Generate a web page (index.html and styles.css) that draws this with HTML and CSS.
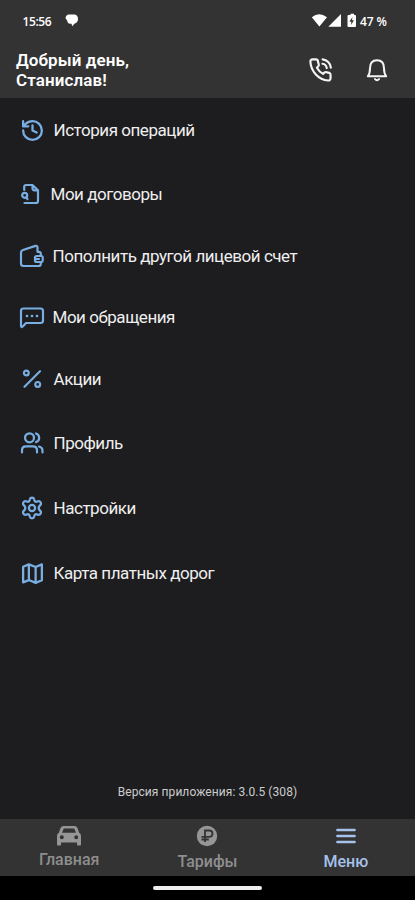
FILE: index.html
```html
<!DOCTYPE html>
<html lang="ru">
<head>
<meta charset="utf-8">
<meta name="viewport" content="width=device-width">
<title>Меню</title>
<link rel="stylesheet" href="styles.css">
</head>
<body>
<header class="top">
  <div class="status">
    <span class="time">15:56</span>
    <svg class="bubble" width="14" height="14" viewBox="0 0 14 14"><path d="M4 .5h5a4.3 4.3 0 0 1 4 4.2c0 2.8-1.4 4.5-3.3 4.9L7.200 12.300 6.500 9.800H5.200C3 9.800 2.400 8.300 2.300 6.800L.5 4.300C.7 2 2 .5 4 .5Z"/></svg>
    <svg class="signals" width="45" height="16" viewBox="0 0 45 16"><path d="M.8 4.200Q8-1.500 16 4.200L8.400 13.500ZM30 1v12.800H17.300ZM38 2h1.500V.7h3.600V2H44q1 0 1 1v10q0 1-1 1h-6.500q-1 0-1-1V3q0-1 1-1Z"/><path class="bolt" d="m41.400 4-3 4.700h2L40 12l3-4.700h-2Z"/></svg>
    <span class="charge">47 %</span>
  </div>
  <div class="greeting">
    <h1>Добрый день,<br>Станислав!</h1>
    <svg class="action phone" width="26" height="26" viewBox="0 0 24 24"><path d="M20.800 16.500v3.200a2 2 0 0 1-2.200 2A18.500 18.500 0 0 1 2.200 4.400a2 2 0 0 1 2-2.200h3a2 2 0 0 1 2 1.700c.1.900.3 1.800.7 2.700a2 2 0 0 1-.5 2.100L8.200 9.900a15 15 0 0 0 5.700 5.700l1.200-1.200a2 2 0 0 1 2.100-.4c.8.3 1.700.5 2.600.6a2 2 0 0 1 1 1.900ZM13.500 2.200a8.500 8.500 0 0 1 7.600 7.600M13.300 6.200a4.700 4.700 0 0 1 4 4"/></svg>
    <svg class="action bell" width="26" height="26" viewBox="0 0 26 26"><path d="M3.800 19.300C5.500 17.200 6 15.800 6 11.300c0-5 2.600-8 7-8s7 3 7 8c0 4.500.5 5.900 2.200 8ZM11 22.100q2 2.200 4 0"/></svg>
  </div>
</header>
<main>
  <nav class="menu">
    <a class="item history"><svg width="25" height="25" viewBox="0 0 24 24"><path d="M3 12a9 9 0 1 0 9-9 9.750 9.750 0 0 0-6.740 2.740L3 8M3 3v5h5M12 7v5l4 2"/></svg><span>История операций</span></a>
    <a class="item contracts"><svg width="22" height="24" viewBox="0 0 22 24"><path d="M4.200 8V5q0-2 2-2h6.300l5.500 5.300V19q0 2-2 2H4.500M12.500 3.200v3.100q0 2 2 2H18M6.500 15.500l1 1.700"/><circle cx="4.700" cy="13.300" r="2.500"/></svg><span>Мои договоры</span></a>
    <a class="item wallet"><svg width="26" height="24" viewBox="0 0 26 24"><path d="M18.500 7.800V3.500Q18.500 1.300 16.500 1.900L4 6Q2 6.600 2 8.500v11Q2 22 4.500 22h15q2.300 0 2.300-2.300V18M21.800 11.500V9.800q0-2-2-2h-1.300M17.800 12h4.700q1.200 0 1.200 1.500v3q0 1.500-1.200 1.500h-4.700q-1.800 0-1.800-1.500V13.500q0-1.500 1.800-1.500ZM16.500 15h3.500"/></svg><span>Пополнить другой лицевой счет</span></a>
    <a class="item tickets"><svg width="26" height="22" viewBox="0 0 26 22"><path d="M2 18.500V4q0-2.500 2.500-2.500h17Q24 1.500 24 4v9.500q0 2.500-2.500 2.500H7l-3.200 3.500Q2 21 2 18.500Z"/><path class="dots" d="M8 9h.01M13 9h.01M18 9h.01"/></svg><span>Мои обращения</span></a>
    <a class="item offers"><svg width="22" height="22" viewBox="0 0 22 22"><path d="m3.500 18.700 15.500-15.500"/><circle cx="5.300" cy="5" r="2.400"/><circle cx="16.700" cy="16.400" r="2.400"/></svg><span>Акции</span></a>
    <a class="item profile"><svg width="26" height="24" viewBox="0 0 26 24"><circle cx="10.500" cy="6.800" r="4.500"/><path d="M3 21.500v-2.200q0-4 4-4h7q4 0 4 4v2.200M17 2.500a4.500 4.500 0 0 1 0 8.600M20 15.500q3.500.8 3.500 4v2"/></svg><span>Профиль</span></a>
    <a class="item settings"><svg width="24" height="24" viewBox="0 0 24 24"><path d="M9.900 3.300q.3-1.600 2.100-1.600t2.100 1.600l.4 1.400q.6 1.300 2 1.100l1.500-.5q1.700-.5 2.600 1.100t-.3 2.700l-1 1q-1.200 1.900 0 3.800l1 1q1.200 1.200.3 2.700t-2.600 1.100l-1.500-.5q-1.400-.2-2 1.100l-.4 1.400q-.3 1.600-2.100 1.600t-2.100-1.600l-.4-1.400q-.6-1.300-2-1.100l-1.500.5q-1.700.4-2.600-1.100t.3-2.700l1-1q1.200-1.900 0-3.800l-1-1q-1.200-1.100-.3-2.700T6 5.300l1.500.5q1.400.2 2-1.100Z"/><circle cx="12" cy="12" r="3.100"/></svg><span>Настройки</span></a>
    <a class="item map"><svg width="25" height="25" viewBox="0 0 24 24"><path d="m3 5.500 5.500-2.300 6.500 2.600 6-2.600v15.300L15 21l-6.500-2.700L3 20.500ZM8.500 3.200v15.100M15 5.800V21"/></svg><span>Карта платных дорог</span></a>
  </nav>
  <p class="version">Версия приложения: 3.0.5 (308)</p>
</main>
<nav class="tabs">
  <a class="tab home"><svg width="26" height="22" viewBox="0 0 26 22"><path fill-rule="evenodd" d="M7.500 1h11q2 0 3 2l1.600 4.800q1.900 1 1.900 3v8.700q0 1-1 1h-2q-1 0-1-1v-2H5v2q0 1-1 1H2q-1 0-1-1v-8.700q0-2 1.900-3L4.500 3q1-2 3-2ZM7.800 3.500 6 7.800h14l-1.800-4.300ZM5.800 10.200a2 2 0 1 0 .01 4 2 2 0 0 0 0-4Zm14.400 0a2 2 0 1 0 .01 4 2 2 0 0 0 0-4Z"/></svg><span>Главная</span></a>
  <a class="tab tariffs"><svg width="22" height="22" viewBox="0 0 22 22"><circle cx="11" cy="11" r="10.200"/><path class="ruble" d="M9 17V5.500h4.200q3.300 0 3.300 3.200t-3.300 3.200H5.500M5.500 14.500h7.300"/></svg><span>Тарифы</span></a>
  <a class="tab current"><svg width="20" height="16" viewBox="0 0 20 16"><path d="M1.500 2h17M1.500 8h17M1.500 14h17"/></svg><span>Меню</span></a>
</nav>
<footer><i></i></footer>
</body>
</html>
```
FILE: styles.css
```css
* { box-sizing: border-box; }
body {
  margin: 0;
  height: 900px;
  display: grid;
  grid-template-rows: 98px 721px 57px 24px;
  overflow: hidden;
  background: #1d1d1f;
  color: #efefef;
  font-family: Roboto, sans-serif;
}
svg { display: block; flex: none; overflow: visible; }
.top { background: #333; }
.status {
  display: flex;
  align-items: center;
  height: 42px;
  padding: 0 28px 0 22.500px;
  font-family: "Open Sans", sans-serif;
  font-size: 12px;
  font-weight: 600;
  color: #fff;
  fill: #fff;
}
.time { width: 42px; letter-spacing: -.4px; }
.signals { margin-left: auto; }
.bolt { fill: #333; }
.charge { width: 27px; margin-left: 4px; white-space: nowrap; letter-spacing: -.1px; }
.greeting { display: flex; padding: 8px 25px 0 16px; }
h1 { flex: 1; margin: 0; font-size: 17px; line-height: 20px; font-weight: 600; letter-spacing: .1px; color: #fff; }
.action { fill: none; stroke: #f5f5f5; stroke-width: 2; stroke-linejoin: round; stroke-linecap: round; margin-top: 7px; }
.phone { margin-right: 30px; }
main { display: flex; flex-direction: column; justify-content: space-between; }
.menu { display: grid; grid-template-rows: 65px 62px 62px 61px 62px 66px 64px 66px; }
.item { display: flex; align-items: center; font-size: 17px; line-height: 20px; letter-spacing: -.46px; padding-left: 20px; white-space: nowrap; }
.item svg { fill: none; stroke: #78aee2; stroke-width: 2.200; stroke-linecap: round; stroke-linejoin: round; }
.item .dots { stroke-width: 2.700; }
.item span { margin: -1px 0 0 8.500px; }
.item.wallet, .item.tickets { padding-left: 19px; }
.item.wallet span, .item.tickets span { margin-left: 7.500px; }
.item.offers { padding-left: 21px; }
.item.offers span { margin-left: 10.500px; }
.item.profile { padding-left: 19px; }
.item.settings span { margin-left: 9.500px; }
.version { margin: 0 0 19px; text-align: center; font-size: 12px; line-height: 16px; letter-spacing: .07px; color: #ccc; }
.tabs { display: grid; grid-template-columns: repeat(3, 1fr); background: #333; color: #8e8e8e; }
.tab { display: flex; flex-direction: column; align-items: center; padding-top: 6px; font-size: 16px; line-height: 20px; font-weight: 500; fill: #969696; }
.tab span { margin-top: 3px; }
.ruble { fill: none; stroke: #333; stroke-width: 1.800; }
.tariffs span { margin-top: 5px; }
.current { color: #a5c2ec; padding-top: 9px; }
.current svg { fill: none; stroke: #a5c2ec; stroke-width: 2.700; stroke-linecap: round; }
.current span { margin-top: 8px; }
footer { display: flex; justify-content: center; background: #000; padding-top: 10px; }
footer i { width: 109px; height: 4px; border-radius: 2px; background: #eee; }
```
